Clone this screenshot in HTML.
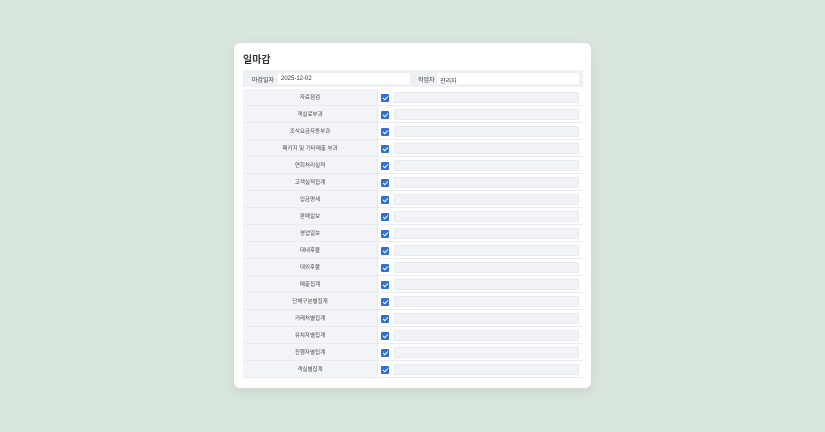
<!DOCTYPE html>
<html><head><meta charset="utf-8"><style>
*{margin:0;padding:0;box-sizing:border-box}
body{width:825px;height:432px;background:#d8e6dd;font-family:"Liberation Sans","Noto Sans CJK KR",sans-serif;position:relative;overflow:hidden}
.card{position:absolute;left:234px;top:43px;width:357px;height:345px;background:#fff;border-radius:6px;box-shadow:0 4px 14px rgba(0,0,0,.08)}
.title{position:absolute;left:9px;top:8px;font-size:10px;font-weight:bold;color:#333}
.hdr{position:absolute;left:9px;top:27px;width:340px;height:17px;background:#eef1f4}
.hdr span{position:absolute;top:5px;font-size:6px;color:#333}
.hdr .in{position:absolute;top:3px;height:11px;background:#fff;font-size:6px;color:#333;padding:2.5px 0 0 3px}
.row{position:absolute;left:9px;width:340px;height:17px;border-bottom:1px solid #e8ebef}
.lab{position:absolute;left:0;top:0;width:135px;height:16px;background:#f2f4f7;font-size:5.5px;color:#444;text-align:center;line-height:18px;border-right:1px solid #e4e7eb}
.cb{position:absolute;left:138px;top:5px;width:8px;height:8px;background:#2f6fd6;border-radius:1px}
.cb:after{content:"";position:absolute;left:2.5px;top:1px;width:2px;height:4px;border:solid #fff;border-width:0 1.2px 1.2px 0;transform:rotate(45deg)}
.fld{position:absolute;left:151px;top:3px;width:185px;height:11px;background:#f1f3f6;border:1px solid #e6e9ee;border-radius:2px}
</style></head><body>
<div class="card">
<div class="title">일마감</div>
<div class="hdr"><span style="left:9px">마감일자</span><div class="in" style="left:35px;width:132px">2025-12-02</div><span style="left:175px">작업자</span><div class="in" style="left:194px;width:142px">관리자</div></div>
<div id="rows"></div>
</div>
<script>
var L=["자료점검","객실료부과","조식요금자동부과","패키지 및 기타매출 부과","연회처리실적","고객실적집계","입금명세","판매일보","영업일보","대내후불","대외후불","매출집계","단체구분별집계","거래처별집계","유치자별집계","진행자별집계","객실별집계"];
var h="";L.forEach(function(t,i){h+='<div class="row" style="top:'+(46+i*17)+'px"><div class="lab">'+t+'</div><div class="cb"></div><div class="fld"></div></div>'});
document.getElementById("rows").outerHTML=h;
</script>
</body></html>
